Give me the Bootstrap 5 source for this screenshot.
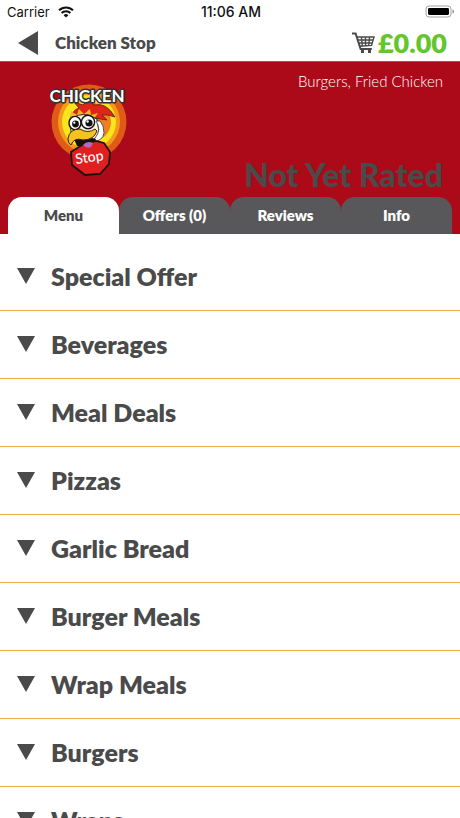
<!DOCTYPE html>
<html lang="en">
<head>
<meta charset="utf-8">
<meta name="viewport" content="width=device-width, initial-scale=1">
<title>Chicken Stop</title>
<link rel="stylesheet" href="https://cdn.jsdelivr.net/npm/bootstrap@5.3.0/dist/css/bootstrap.min.css">
<style>
  body { font-family: Lato, sans-serif; color: #4a4a4a; background: #fff; }
  .status-bar { font-family: Inter, sans-serif; font-size: 13px; line-height: 24px; height: 24px; padding: 0 5px 0 7px; color: #111; }
  .status-bar > * { flex: 1 1 0; }
  .clock { font-size: 14px; font-weight: 500; }
  .top-bar { height: 37px; padding: 0 13px 0 17px; }
  .shop-name { font-size: 17px; line-height: 24px; font-weight: 800; }
  .basket { color: #65c52c; font-size: 27px; line-height: 32px; font-weight: 800; gap: 3px; }
  .hero { background: #ac0919; border-top: 1px solid #b44a58; }
  .hero-body { height: 135px; padding: 8px 17px 2px 50px; }
  .brand-logo { margin-top: 14px; }
  .cuisine { font-size: 15px; line-height: 22px; font-weight: 300; color: #fff; }
  .rating { font-size: 32px; line-height: 40px; font-weight: 900; }
  .tab-row { padding: 0 8px; }
  .tab-row .nav-link { height: 37px; padding: 0; border-radius: 14px 14px 0 0; background: #58585a; color: #fff; font-size: 15px; font-weight: 800; line-height: 36px; }
  .tab-row .nav-link.active { background: #fff; color: #4a4a4a; }
  .menu-list { padding-top: 9px; min-height: 0; scrollbar-width: none; }
  .menu-list::-webkit-scrollbar { display: none; }
  .menu-item { border-bottom: 1px solid #f0a94e; }
  .menu-row { height: 67px; padding: 0 17px 2px; gap: 16px; color: #4a4a4a; font-size: 25px; line-height: 32px; font-weight: 800; }
</style>
</head>
<body>
<svg class="d-none" aria-hidden="true"><symbol id="arrow-down" viewBox="0 0 18 16"><path d="M0 0h18L9 16z" fill="#4a4a4a"/></symbol></svg>
<div class="vh-100 d-flex flex-column overflow-hidden">
  <div class="status-bar d-flex align-items-center flex-shrink-0">
    <div class="d-flex align-items-center gap-2">
      <span>Carrier</span>
      <svg width="16" height="12" viewBox="0 0 16 12" fill="none" stroke="#111" stroke-width="2" aria-hidden="true"><path d="M1 4.3a10 10 0 0 1 14 0M3.6 7a6.2 6.2 0 0 1 8.8 0"/><path d="M5.6 9.2a3.5 3.5 0 0 1 4.8 0L8 11.6z" fill="#111" stroke="none"/></svg>
    </div>
    <div class="clock text-center">11:06 AM</div>
    <div class="d-flex justify-content-end">
      <svg width="30" height="14" viewBox="0 0 30 14" aria-hidden="true"><rect x="1" y="1" width="25" height="11" rx="3" fill="none" stroke="#a3a3a3"/><rect x="3" y="3" width="21" height="7" rx="1.4" fill="#000"/><path d="M27.5 4.5v4q1.5-.6 1.5-2t-1.5-2" fill="#888"/></svg>
    </div>
  </div>

  <header class="top-bar d-flex align-items-center justify-content-between flex-shrink-0">
    <div class="d-flex align-items-center gap-3">
      <button class="btn p-0 border-0 d-flex" type="button" aria-label="Back"><svg width="22" height="24" viewBox="0 0 22 24"><path d="M1 12L21 0v24z" fill="#4a4a4a"/></svg></button>
      <h1 class="shop-name m-0">Chicken Stop</h1>
    </div>
    <a class="basket d-flex align-items-center text-decoration-none" href="#basket">
      <svg width="23" height="22" viewBox="0 0 23 22" fill="none" stroke="#4a4a4a" aria-hidden="true"><path d="M0 1.5h3.6L8.6 17h11.2" stroke-width="2"/><path d="M5 5h17l-2.4 8.4-12 .8M5.8 8h15.2M6.8 11h13.4M9.4 5l1 9M13.4 5l.2 9M17.6 5l-1 9" stroke-width="1.4"/><path d="M9 18h3v3H9zM16 18h3v3h-3z" fill="#4a4a4a" stroke="none"/></svg>
      <span>£0.00</span>
    </a>
  </header>

  <section class="hero flex-shrink-0">
    <div class="hero-body d-flex justify-content-between">
      <svg class="brand-logo flex-shrink-0" width="80" height="94" viewBox="0 0 80 94" role="img" aria-label="Chicken Stop logo">
        <circle cx="39" cy="38" r="37.5" fill="#df5c18"/>
        <circle cx="39" cy="38" r="31" fill="#f59a1a"/>
        <circle cx="39" cy="38" r="27" fill="#f8e51c"/>
        <circle cx="42" cy="38" r="19" fill="#ed8020"/>
        <path d="M20 36q2-10 9-12l-5-6 9 3 4-4 8 4q11-3 20 12-8-3-13-2l5 5-12-2 2 6-10-9-9 1z" fill="#df2517" stroke="#541c12" stroke-width=".8"/>
        <path d="M21 27l6 4 2-6 5 5 6-5 1 6 7-2-4 6-14-2-10 2z" fill="#f6b727"/>
        <path d="M20 36q8-7 18-5l9 4 2 13q-3 10-15 12L21 48z" fill="#fff4dc" stroke="#222"/>
        <path d="M46 37q6 9-1 17l-3 4q11-1 12-9 0-8-4-12z" fill="#fff" stroke="#333" stroke-width=".8"/>
        <ellipse cx="25" cy="39" rx="6" ry="6.6" fill="#fff" stroke="#111" stroke-width="1.4"/>
        <ellipse cx="38" cy="38" rx="6.6" ry="6.8" fill="#fff" stroke="#111" stroke-width="1.4"/>
        <circle cx="25.5" cy="40" r="3.4" fill="#111"/><circle cx="39" cy="39" r="3.6" fill="#111"/>
        <circle cx="24.3" cy="38.7" r="1.1" fill="#fff"/><circle cx="37.6" cy="37.5" r="1.2" fill="#fff"/>
        <path d="M24 55q10-4 22 0l-3 7H27z" fill="#181010"/>
        <path d="M32 61l14-4 8 2 6 9-1 12-9 10-15 1-13-10-1-13z" fill="#df1f20" stroke="#210e0e" stroke-width="1.8"/>
        <path d="M33 61q4-5 10-2l-2 4q-4 2-8-2z" fill="#b56bbd"/>
        <path d="M18 55q1-10 12-10 8 5 15 0l2 2q-3 9-14 9-9-3-12 5-3-2-3-6z" fill="#f8c21d" stroke="#352610"/>
        <g font-family="Lato, sans-serif" text-anchor="middle" fill="#fff">
          <text x="37" y="18" font-size="17" font-weight="700" stroke="#333" stroke-width="3" stroke-linejoin="round" paint-order="stroke">CHICKEN</text>
          <text x="40" y="78" font-size="14" font-weight="500" transform="rotate(-8 40 78)">Stop</text>
        </g>
      </svg>
      <div class="d-flex flex-column justify-content-between text-end">
        <div class="cuisine">Burgers, Fried Chicken</div>
        <div class="rating text-nowrap">Not Yet Rated</div>
      </div>
    </div>
    <nav class="tab-row nav nav-justified flex-nowrap" aria-label="Sections">
      <a class="nav-link active" aria-current="page" href="#menu">Menu</a>
      <a class="nav-link" href="#offers">Offers (0)</a>
      <a class="nav-link" href="#reviews">Reviews</a>
      <a class="nav-link" href="#info">Info</a>
    </nav>
  </section>

  <main id="menu" class="menu-list flex-grow-1 overflow-auto">
    <ul class="list-unstyled m-0">
      <li class="menu-item"><button type="button" class="menu-row w-100 border-0 bg-transparent d-flex align-items-center text-start"><svg width="18" height="16" aria-hidden="true"><use href="#arrow-down"/></svg><span>Special Offer</span></button></li>
      <li class="menu-item"><button type="button" class="menu-row w-100 border-0 bg-transparent d-flex align-items-center text-start"><svg width="18" height="16" aria-hidden="true"><use href="#arrow-down"/></svg><span>Beverages</span></button></li>
      <li class="menu-item"><button type="button" class="menu-row w-100 border-0 bg-transparent d-flex align-items-center text-start"><svg width="18" height="16" aria-hidden="true"><use href="#arrow-down"/></svg><span>Meal Deals</span></button></li>
      <li class="menu-item"><button type="button" class="menu-row w-100 border-0 bg-transparent d-flex align-items-center text-start"><svg width="18" height="16" aria-hidden="true"><use href="#arrow-down"/></svg><span>Pizzas</span></button></li>
      <li class="menu-item"><button type="button" class="menu-row w-100 border-0 bg-transparent d-flex align-items-center text-start"><svg width="18" height="16" aria-hidden="true"><use href="#arrow-down"/></svg><span>Garlic Bread</span></button></li>
      <li class="menu-item"><button type="button" class="menu-row w-100 border-0 bg-transparent d-flex align-items-center text-start"><svg width="18" height="16" aria-hidden="true"><use href="#arrow-down"/></svg><span>Burger Meals</span></button></li>
      <li class="menu-item"><button type="button" class="menu-row w-100 border-0 bg-transparent d-flex align-items-center text-start"><svg width="18" height="16" aria-hidden="true"><use href="#arrow-down"/></svg><span>Wrap Meals</span></button></li>
      <li class="menu-item"><button type="button" class="menu-row w-100 border-0 bg-transparent d-flex align-items-center text-start"><svg width="18" height="16" aria-hidden="true"><use href="#arrow-down"/></svg><span>Burgers</span></button></li>
      <li class="menu-item"><button type="button" class="menu-row w-100 border-0 bg-transparent d-flex align-items-center text-start"><svg width="18" height="16" aria-hidden="true"><use href="#arrow-down"/></svg><span>Wraps</span></button></li>
    </ul>
  </main>
</div>
<script src="https://cdn.jsdelivr.net/npm/bootstrap@5.3.0/dist/js/bootstrap.bundle.min.js"></script>
</body>
</html>
